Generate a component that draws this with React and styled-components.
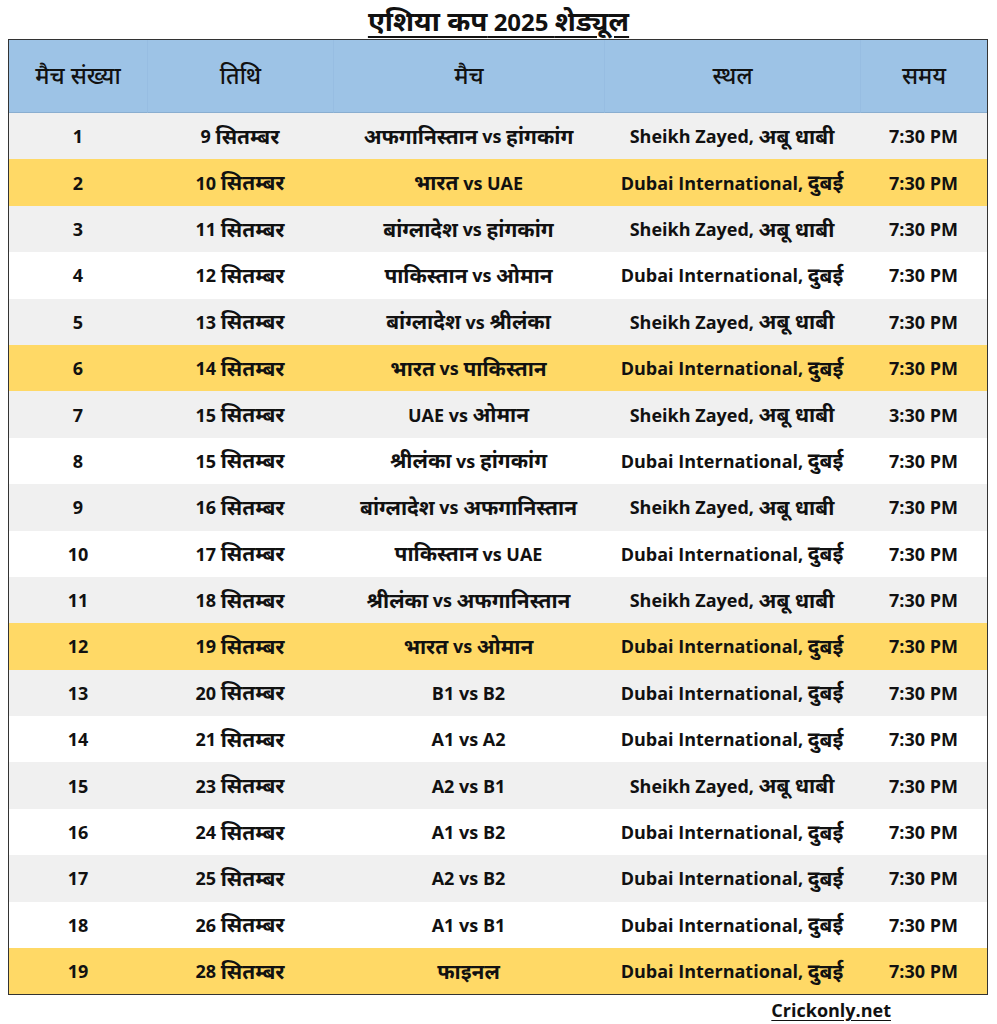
import React from 'react';
import styled, { createGlobalStyle } from 'styled-components';

const GlobalStyle = createGlobalStyle`
    body {
        margin: 0;
        background: #ffffff;
        font-family: "Open Sans", "Noto Sans", "Noto Sans Devanagari", sans-serif;
        color: #111111;
    }
`;

const Page = styled.div`
    width: 997px;
    height: 1024px;
    display: flex;
    flex-direction: column;
    align-items: center;
`;

const Title = styled.h1`
    margin: 5px 0 0;
    height: 34px;
    font-size: 24px;
    font-weight: 700;
    line-height: 34px;
    text-decoration: underline;
    text-underline-offset: 5px;
    text-decoration-thickness: 1.5px;
`;

// devanagari fallback font renders small, bump it to match
const Deva = styled.span`
    font-size: 1.16em;
    line-height: 1;
`;

const Table = styled.div`
    width: 978px;
    margin-left: -1px;
    border: 1.5px solid #333333;
    display: grid;
    grid-template-columns: 138px 186px 271px 256px 1fr;
`;

const HeadCell = styled.div`
    height: 72px;
    background: #9dc3e6;
    display: flex;
    align-items: center;
    justify-content: center;
    font-size: 20px;
    font-weight: 500;
    border-left: ${p => (p.$first ? 'none' : '1px solid #97bde2')};
    border-bottom: 1px solid #8aaed0;
`;

const rowBg = { gray: '#f0f0f0', white: '#ffffff', gold: '#ffd966' };

const Cell = styled.div`
    height: 46.4px;
    background: ${p => rowBg[p.$tone]};
    display: flex;
    align-items: center;
    justify-content: center;
    font-size: 18px;
    font-weight: 700;
    white-space: pre;
`;

const Footer = styled.div`
    align-self: flex-end;
    margin: 3px 106px 0 0;
    font-size: 18px;
    font-weight: 700;
    text-decoration: underline;
    text-underline-offset: 3px;
`;

const Mixed = ({ text }) =>
    text
        .split(/([\u0900-\u097F][\u0900-\u097F ]*[\u0900-\u097F]|[\u0900-\u097F])/)
        .filter(Boolean)
        .map((part, i) =>
            /[\u0900-\u097F]/.test(part) ? <Deva key={i}>{part}</Deva> : part
        );

const headers = ['मैच संख्या', 'तिथि', 'मैच', 'स्थल', 'समय'];

const SZ = 'Sheikh Zayed, अबू धाबी';
const DI = 'Dubai International, दुबई';

const matches = [
    ['9 सितम्बर', 'अफगानिस्तान vs हांगकांग', SZ, '7:30 PM'],
    ['10 सितम्बर', 'भारत vs UAE', DI, '7:30 PM', true],
    ['11 सितम्बर', 'बांग्लादेश vs हांगकांग', SZ, '7:30 PM'],
    ['12 सितम्बर', 'पाकिस्तान vs ओमान', DI, '7:30 PM'],
    ['13 सितम्बर', 'बांग्लादेश vs श्रीलंका', SZ, '7:30 PM'],
    ['14 सितम्बर', 'भारत vs पाकिस्तान', DI, '7:30 PM', true],
    ['15 सितम्बर', 'UAE vs ओमान', SZ, '3:30 PM'],
    ['15 सितम्बर', 'श्रीलंका vs हांगकांग', DI, '7:30 PM'],
    ['16 सितम्बर', 'बांग्लादेश vs अफगानिस्तान', SZ, '7:30 PM'],
    ['17 सितम्बर', 'पाकिस्तान vs UAE', DI, '7:30 PM'],
    ['18 सितम्बर', 'श्रीलंका vs अफगानिस्तान', SZ, '7:30 PM'],
    ['19 सितम्बर', 'भारत vs ओमान', DI, '7:30 PM', true],
    ['20 सितम्बर', 'B1 vs B2', DI, '7:30 PM'],
    ['21 सितम्बर', 'A1 vs A2', DI, '7:30 PM'],
    ['23 सितम्बर', 'A2 vs B1', SZ, '7:30 PM'],
    ['24 सितम्बर', 'A1 vs B2', DI, '7:30 PM'],
    ['25 सितम्बर', 'A2 vs B2', DI, '7:30 PM'],
    ['26 सितम्बर', 'A1 vs B1', DI, '7:30 PM'],
    ['28 सितम्बर', 'फाइनल', DI, '7:30 PM', true],
];

export default function App() {
    return (
        <Page>
            <GlobalStyle />
            <Title><Mixed text="एशिया कप 2025 शेड्यूल" /></Title>
            <Table>
                {headers.map((h, i) => (
                    <HeadCell key={h} $first={i === 0}><Mixed text={h} /></HeadCell>
                ))}
                {matches.map(([date, match, venue, time, india], i) => {
                    const tone = india ? 'gold' : i % 2 === 0 ? 'gray' : 'white';
                    return (
                        <React.Fragment key={i}>
                            <Cell $tone={tone}>{i + 1}</Cell>
                            <Cell $tone={tone}><Mixed text={date} /></Cell>
                            <Cell $tone={tone}><Mixed text={match} /></Cell>
                            <Cell $tone={tone}><Mixed text={venue} /></Cell>
                            <Cell $tone={tone}>{time}</Cell>
                        </React.Fragment>
                    );
                })}
            </Table>
            <Footer>Crickonly.net</Footer>
        </Page>
    );
}
